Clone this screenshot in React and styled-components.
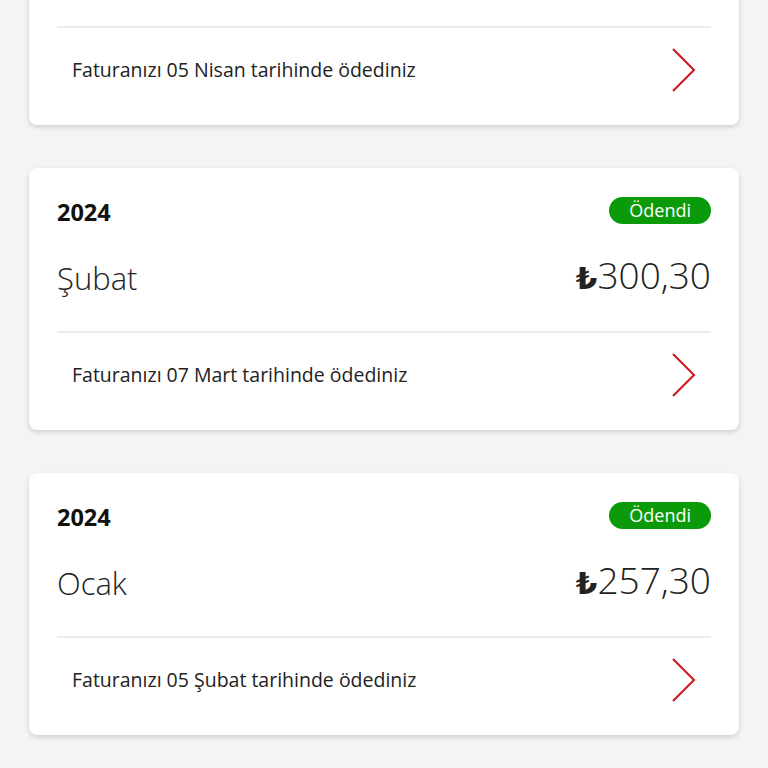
import React from 'react';
import styled, { createGlobalStyle } from 'styled-components';

const GlobalStyle = createGlobalStyle`
  html, body {
    margin: 0;
    padding: 0;
    background: #f4f4f4;
    font-family: "Open Sans", "Noto Sans", sans-serif;
    color: #222;
  }
`;

const bills = [
  { year: 2024, month: 'Mart', amount: '312,80', paidOn: 'Faturanızı 05 Nisan tarihinde ödediniz' },
  { year: 2024, month: 'Şubat', amount: '300,30', paidOn: 'Faturanızı 07 Mart tarihinde ödediniz' },
  { year: 2024, month: 'Ocak', amount: '257,30', paidOn: 'Faturanızı 05 Şubat tarihinde ödediniz' },
];

const Page = styled.div`
  height: 768px;
  overflow: hidden;
  padding: 0 29px;
  box-sizing: border-box;
`;

const List = styled.div`
  display: flex;
  flex-direction: column;
  gap: 43px;
  margin-top: -137px;
`;

const Card = styled.div`
  background: #fff;
  border-radius: 8px;
  box-shadow: 0 2px 5px rgba(0, 0, 0, 0.16);
  height: 262px;
  box-sizing: border-box;
  padding: 0 28px;
  display: flex;
  flex-direction: column;
`;

const Top = styled.div`
  height: 165px;
  border-bottom: 2px solid #ebebeb;
  box-sizing: border-box;
  padding-top: 28px;
`;

const Row = styled.div`
  display: flex;
  justify-content: space-between;
  align-items: ${p => p.$align || 'center'};
`;

const Year = styled.div`
  font-size: 23.5px;
  font-weight: 700;
  color: #111;
  line-height: 32px;
`;

const Badge = styled.div`
  background: #0a9a0a;
  color: #fff;
  font-size: 18px;
  line-height: 27px;
  padding: 0 20px;
  border-radius: 14px;
  margin-top: -3px;
`;

const Month = styled.div`
  font-size: 31px;
  font-weight: 300;
  color: #222;
  margin-top: 30px;
  line-height: 40px;
`;

const Amount = styled.div`
  font-size: 37px;
  font-weight: 300;
  color: #222;
  margin-top: 25px;
  line-height: 44px;
  span {
    font-weight: 700;
    font-family: "DejaVu Sans", sans-serif;
    font-size: 31px;
  }
`;

const Footer = styled.div`
  flex: 1;
  display: flex;
  align-items: center;
  justify-content: space-between;
  padding: 0 14px 14px 15px;
`;

const FooterText = styled.div`
  font-size: 19.5px;
  color: #222;
`;

const Chevron = () => (
  <svg width="26" height="46" viewBox="0 0 26 46" fill="none">
    <path d="M2 2 L23 23 L2 44" stroke="#d0121b" strokeWidth="2" />
  </svg>
);

const BillCard = ({ bill }) => (
  <Card>
    <Top>
      <Row>
        <Year>{bill.year}</Year>
        <Badge>Ödendi</Badge>
      </Row>
      <Row $align="flex-start">
        <Month>{bill.month}</Month>
        <Amount><span>₺</span>{bill.amount}</Amount>
      </Row>
    </Top>
    <Footer>
      <FooterText>{bill.paidOn}</FooterText>
      <Chevron />
    </Footer>
  </Card>
);

export default function App() {
  return (
    <>
      <GlobalStyle />
      <Page>
        <List>
          {bills.map(b => <BillCard key={b.month} bill={b} />)}
        </List>
      </Page>
    </>
  );
}
